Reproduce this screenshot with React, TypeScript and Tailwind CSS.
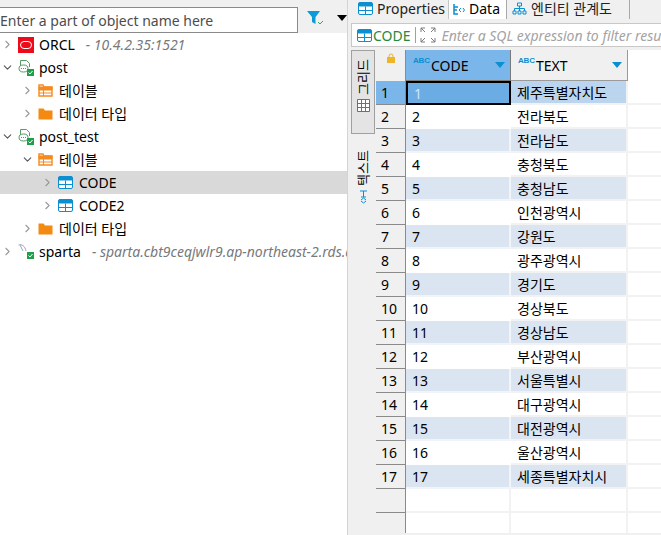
import { ChevronDown, ChevronRight } from "lucide-react";
import type { ReactNode } from "react";

const font = "font-['Noto_Sans','Noto_Sans_CJK_KR',sans-serif]";

const rows = [
  "제주특별자치도", "전라북도", "전라남도", "충청북도", "충청남도", "인천광역시",
  "강원도", "광주광역시", "경기도", "경상북도", "경상남도", "부산광역시",
  "서울특별시", "대구광역시", "대전광역시", "울산광역시", "세종특별자치시",
];

const GridIcon = ({ color = "#0a8fd0" }: { color?: string }) => (
  <svg width="15" height="13" viewBox="0 0 15 13" className="shrink-0">
    <rect x="0.5" y="0.5" width="14" height="12" rx="1.5" fill="#fff" stroke={color} />
    <rect x="0.5" y="0.5" width="14" height="4" rx="1" fill={color} />
    <path d="M0.5 8.5H14.5M7.5 4.5V12.5" stroke={color} />
  </svg>
);

const TablesIcon = () => (
  <svg width="15" height="13" viewBox="0 0 15 13" className="shrink-0">
    <path d="M1 12V1h4l1 2h8v9z" fill="#fff" stroke="#f58a1f" strokeWidth="1.4" />
    <path d="M1 3h13v3H1zM5.500 6v6M1 9h13" fill="#f58a1f" stroke="#f58a1f" />
  </svg>
);

const FolderIcon = () => (
  <svg width="15" height="12" viewBox="0 0 15 12" className="shrink-0">
    <path d="M0.500 11.500V0.500h5l1.500 2h7.500v9z" fill="#f58a12" />
  </svg>
);

const DbIcon = () => (
  <svg width="16" height="18" viewBox="0 0 16 18" className="shrink-0">
    <path d="M2.500 7V1.500h6l3 3V8" fill="#fff" stroke="#5a9a6a" />
    <ellipse cx="5.500" cy="9.500" rx="4.500" ry="3.500" fill="#fff" stroke="#4f9a60" />
    <path d="M3 9.500h5" stroke="#4f9a60" strokeDasharray="1 1" />
    <rect x="9" y="10" width="7" height="7" fill="#1ea04a" />
    <path d="M10.500 13.500l1.500 1.500 2.500-3" stroke="#fff" fill="none" />
  </svg>
);

const OracleIcon = () => (
  <div className="w-4 h-4 bg-[#ee0a1a] flex items-center justify-center shrink-0">
    <div className="w-3 h-2 rounded-full border-[1.5px] border-white" />
  </div>
);

const SpartaIcon = () => (
  <svg width="16" height="18" viewBox="0 0 16 18" className="shrink-0">
    <path d="M0.500 2C4 1 7 3 8 8M2 2l3 6" stroke="#9aa7b5" fill="none" />
    <rect x="9" y="9" width="7" height="7" fill="#1ea04a" />
    <path d="M10.500 12.500l1.500 1.500 2.500-3" stroke="#fff" fill="none" />
  </svg>
);

const AbcIcon = () => (
  <span className="text-[8px] leading-none font-bold text-[#0a8fd0] tracking-tight font-['Liberation_Sans',sans-serif] w-4 -mt-2 mr-[2px] shrink-0">
    ABC
  </span>
);

const SortArrow = () => (
  <svg width="10" height="6" viewBox="0 0 10 6" className="shrink-0">
    <path d="M0 0h10L5 6z" fill="#0a8fd0" />
  </svg>
);

interface TreeRowProps {
  indent: string;
  open?: boolean;
  icon: ReactNode;
  label: string;
  detail?: string;
  selected?: boolean;
}

const TreeRow = ({ indent, open, icon, label, detail, selected }: TreeRowProps) => (
  <div className={`h-[23px] flex items-center whitespace-nowrap overflow-hidden ${indent} ${selected ? "bg-[#d9d9d9]" : ""}`}>
    {open ? (
      <ChevronDown size={13} strokeWidth={2} className="text-[#555] shrink-0" />
    ) : (
      <ChevronRight size={13} strokeWidth={2} className="text-[#999] shrink-0" />
    )}
    <div className="w-5 ml-[4px] flex justify-start shrink-0">{icon}</div>
    <span className="ml-[1px] text-black">{label}</span>
    {detail && <span className="ml-[11px] italic text-[#77797c]">- {detail}</span>}
  </div>
);

const SideTab = ({ active, label, icon }: { active?: boolean; label: string; icon: ReactNode }) => (
  <div className={`w-[24px] flex flex-col items-center gap-[4px] py-2 ${active ? "h-[84px] border border-[#a0a0a0] bg-[#e4e4e4]" : ""}`}>
    <span className="[writing-mode:vertical-rl] [text-orientation:sideways] rotate-180 leading-none text-[13px] text-black">
      {label}
    </span>
    {icon}
  </div>
);

export default function App() {
  return (
    <div className={`w-[661px] h-[535px] flex overflow-hidden bg-white text-[14px] ${font}`}>
      {/* navigator */}
      <div className="w-[347px] shrink-0 flex flex-col">
        <div className="h-[33px] bg-[#f0f0f0] pt-[7px] flex items-start">
          <div className="w-[300px] h-[26px] bg-white border border-[#8a8a8a] border-l-0 flex items-center text-[#4d4d4d] overflow-hidden whitespace-nowrap">
            Enter a part of object name here
          </div>
          <div className="flex items-center ml-[9px] mt-[4px] gap-[13px]">
            <svg width="17" height="14" viewBox="0 0 17 14">
              <path d="M0 0h13L8.500 6v7L5 11V6z" fill="#0a9bd8" />
              <path d="M11 11l2 2 3-3" stroke="#3aa55a" fill="none" />
            </svg>
            <div className="w-0 h-0 border-x-[5px] border-x-transparent border-t-[6px] border-t-black" />
          </div>
        </div>
        <div className="pt-[0px]">
          <TreeRow indent="pl-[1px]" icon={<OracleIcon />} label="ORCL" detail="10.4.2.35:1521" />
          <TreeRow indent="pl-[1px]" open icon={<DbIcon />} label="post" />
          <TreeRow indent="pl-[21px]" icon={<TablesIcon />} label="테이블" />
          <TreeRow indent="pl-[21px]" icon={<FolderIcon />} label="데이터 타입" />
          <TreeRow indent="pl-[1px]" open icon={<DbIcon />} label="post_test" />
          <TreeRow indent="pl-[21px]" open icon={<TablesIcon />} label="테이블" />
          <TreeRow indent="pl-[41px]" selected icon={<GridIcon />} label="CODE" />
          <TreeRow indent="pl-[41px]" icon={<GridIcon />} label="CODE2" />
          <TreeRow indent="pl-[21px]" icon={<FolderIcon />} label="데이터 타입" />
          <TreeRow indent="pl-[1px]" icon={<SpartaIcon />} label="sparta" detail="sparta.cbt9ceqjwlr9.ap-northeast-2.rds.amazonaws.com" />
        </div>
      </div>

      {/* editor */}
      <div className="flex-1 min-w-0 flex flex-col border-l-[1px] border-[#d4d4d4] bg-[#f0f0f0] pl-[1px]">
        <div className="h-[20px] flex items-end whitespace-nowrap overflow-hidden pl-[5px] -mt-[1px]">
          <div className="h-[21px] flex items-center gap-[4px] pr-[4px] pl-[4px] border-r border-[#c4c4c4] bg-[#f0f0f0] text-[#222] w-[95px]">
            <GridIcon />
            Properties
          </div>
          <div className="h-[21px] flex items-center gap-[4px] px-[4px] bg-white border-r border-[#a8a8a8] w-[58px] text-black">
            <svg width="12" height="12" viewBox="0 0 12 12" className="shrink-0">
              <path d="M1 1v10h4M1 4h4M1 7h3" stroke="#0a8fd0" strokeWidth="1.500" fill="none" />
              <path d="M8 5l-2 2 2 2M10 5l1.500 2L10 9" stroke="#0a8fd0" fill="none" />
            </svg>
            Data
          </div>
          <div className="h-[21px] flex items-center gap-[4px] px-[5px] border-r border-[#a8a8a8] w-[123px] text-[#222] overflow-hidden">
            <svg width="15" height="13" viewBox="0 0 15 13" className="shrink-0">
              <path d="M5.500 1h4v3h-4zM1 9h3v3H1zM6 9h3v3H6zM11 9h3v3h-3zM2.500 9V6.500h10V9M7.500 4v5" stroke="#0a8fd0" fill="none" />
            </svg>
            엔티티 관계도
          </div>
        </div>

        <div className="flex-1 min-h-0 bg-[#f0f0f0] pt-[4px] pl-[2px]">
          <div className="h-[24px] bg-white border border-[#c8c8c8] border-r-0 flex items-center pl-[5px] whitespace-nowrap overflow-hidden">
            <GridIcon />
            <span className="ml-[1px] text-[#1f8a3a]">CODE</span>
            <div className="w-px h-[16px] bg-[#a0a0a0] mx-[4px] shrink-0" />
            <svg width="16" height="16" viewBox="0 0 16 16" className="shrink-0 text-[#7d7d7d]">
              <path d="M1 5V1h4M11 1h4v4M15 11v4h-4M5 15H1v-4M1 1l4 4M15 1l-4 4M15 15l-4-4M1 15l4-4" stroke="currentColor" fill="none" />
            </svg>
            <span className="ml-[6px] italic text-[#a3a3a3]">Enter a SQL expression to filter results (use Ctrl+Space)</span>
          </div>

          <div className="flex mt-[3px] h-[483px]">
            {/* view switcher */}
            <div className="w-[25px] shrink-0 flex flex-col gap-[8px]">
              <SideTab active label="그리드" icon={<svg width="13" height="13" viewBox="0 0 13 13"><path d="M0.500 0.500h12v12h-12zM0.500 4.500h12M0.500 8.500h12M4.500 0.500v12M8.500 0.500v12" stroke="#0a8fd0" fill="#fff" /></svg>} />
              <SideTab label="텍스트" icon={<svg width="11" height="14" viewBox="0 0 11 14"><path d="M2 1h7M5.500 1v6M3 7h5M3 10l2.500-2L8 10M3 11l2.500 2L8 11" stroke="#0a8fd0" fill="none" /></svg>} />
            </div>

            {/* result grid */}
            <div className="flex-1 min-w-0 bg-white overflow-hidden">
              <div className="flex h-[31px]">
                <div className="w-[30px] bg-[#f0f0f0] border-r border-[#8a8a8a] flex justify-center pt-[3px] shrink-0">
                  <svg width="8" height="10" viewBox="0 0 8 10"><path d="M2 4V3a2 2 0 0 1 4 0v1" stroke="#e8b23a" fill="none" /><rect y="4" width="8" height="6" fill="#f0b429" /></svg>
                </div>
                <div className="w-[105px] bg-[#7ab6ea] border-r border-b border-[#7a7a7a] flex items-center pl-[7px] pr-[5px] text-black shrink-0">
                  <AbcIcon />
                  <span className="flex-1">CODE</span>
                  <SortArrow />
                </div>
                <div className="w-[117px] bg-[#f0f0f0] border-r border-b border-[#9a9a9a] flex items-center pl-[7px] pr-[5px] text-black shrink-0">
                  <AbcIcon />
                  <span className="flex-1">TEXT</span>
                  <SortArrow />
                </div>
              </div>
              {rows.map((text, i) => {
                const first = i === 0;
                const band = i % 2 === 0;
                return (
                  <div key={text} className="flex h-[24px]">
                    <div className={`w-[30px] shrink-0 pl-[5px] flex items-center border-r border-b border-r-[#8a8a8a] border-b-[#8a8a8a] text-black ${first ? "bg-[#7ab6ea]" : "bg-[#f0f0f0]"}`}>
                      {i + 1}
                    </div>
                    <div className={`w-[105px] shrink-0 pl-[6px] flex items-center ${first ? "border-2 border-black bg-[#6cace4] text-white/70 pl-[4px]" : `border-r-2 border-b-2 border-white/60 text-black ${band ? "bg-[#dbe5f1]" : "bg-white"}`}`}>
                      {i + 1}
                    </div>
                    <div className={`w-[117px] shrink-0 pl-[6px] flex items-center border-r-2 border-b-2 border-[#f2f2f2] text-black ${first ? "bg-[#bcd5ee]" : band ? "bg-[#dbe5f1]" : "bg-white"}`}>
                      {text}
                    </div>
                    <div className="flex-1 border-b-2 border-[#f2f2f2]" />
                  </div>
                );
              })}
              {[0, 1].map((k) => (
                <div key={k} className="flex h-[24px]">
                  <div className="w-[30px] shrink-0 bg-[#f0f0f0] border-r border-b border-[#8a8a8a]" />
                  <div className="w-[105px] shrink-0 border-r-2 border-b-2 border-[#f2f2f2]" />
                  <div className="w-[117px] shrink-0 border-r-2 border-b-2 border-[#f2f2f2]" />
                  <div className="flex-1 border-b-2 border-[#f2f2f2]" />
                </div>
              ))}
              <div className="flex h-[40px]">
                <div className="w-[30px] shrink-0 bg-[#f0f0f0] border-r border-[#8a8a8a]" />
                <div className="w-[105px] shrink-0 border-r-2 border-[#f2f2f2]" />
                <div className="w-[117px] shrink-0 border-r-2 border-[#f2f2f2]" />
              </div>
            </div>
          </div>
        </div>
      </div>
    </div>
  );
}
